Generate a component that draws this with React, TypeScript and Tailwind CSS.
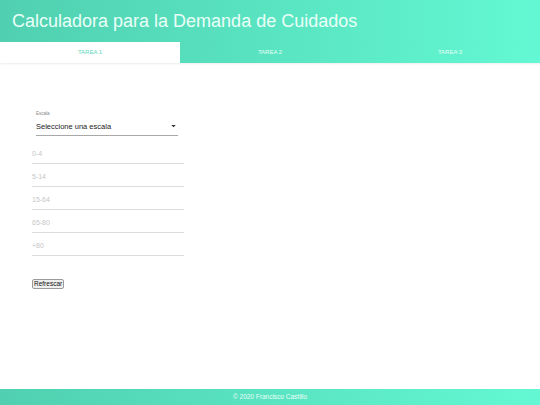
import React from 'react'

const ranges = ['0-4', '5-14', '15-64', '65-80', '+80']

export default function App() {
  return (
    <div className="flex min-h-[405px] flex-col bg-white font-['Liberation_Sans',Arial,sans-serif]">
      <header className="bg-gradient-to-r from-[#50d0b0] to-[#63f8d3]">
        <h1 className="flex h-[42px] items-center pl-[12px] text-[18px] text-[#eafff8]">
          Calculadora para la Demanda de Cuidados
        </h1>
        <nav className="flex h-[21px] shadow-[0_1px_2px_rgba(0,0,0,0.08)]">
          <div className="flex w-1/3 items-center justify-center bg-white text-[6px] text-[#5ed8bb]">
            TAREA 1
          </div>
          <div className="flex w-1/3 items-center justify-center text-[6px] text-[#e8fff8]">
            TAREA 2
          </div>
          <div className="flex w-1/3 items-center justify-center text-[6px] text-[#e8fff8]">
            TAREA 3
          </div>
        </nav>
      </header>

      <main className="flex-1 pl-[32px] pt-[48px]">
        <div className="ml-[4px] w-[142px]">
          <div className="text-[4.5px] leading-[6px] text-[#888]">Escala</div>
          <div className="mt-[3px] flex h-[16px] items-center justify-between border-b border-[#a8a8a8] pb-[3px]">
            <span className="text-[7.5px] leading-[9px] text-[#222]">Seleccione una escala</span>
            <svg width="5" height="3" viewBox="0 0 6 4" className="mr-[2px]">
              <path d="M0 0h6L3 3z" fill="#333" />
            </svg>
          </div>
        </div>

        <div className="mt-[5px] flex w-[152px] flex-col">
          {ranges.map(r => (
            <div
              key={r}
              className="flex h-[23px] items-end border-b border-[#dcdcdc] pb-[5px] text-[7px] leading-[8px] text-[#c6c6c6]"
            >
              {r}
            </div>
          ))}
        </div>

        <button className="mt-[23px] h-[10px] rounded-[2px] border border-[#9a9a9a] bg-[#efefef] px-[1px] text-[6.5px] leading-[8px] text-[#111]">
          Refrescar
        </button>
      </main>

      <footer className="flex h-[16px] items-center justify-center bg-gradient-to-r from-[#50d0b0] to-[#63f8d3] text-[6.5px] text-[#eafff8]">
        © 2020 Francisco Castillo
      </footer>
    </div>
  )
}
